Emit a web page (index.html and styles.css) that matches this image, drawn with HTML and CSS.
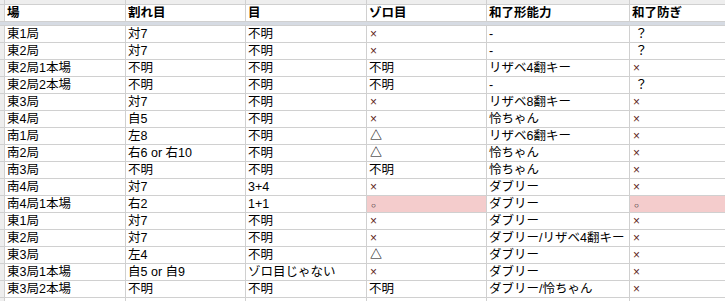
FILE: index.html
```html
<!DOCTYPE html>
<html lang="ja">
<head>
<meta charset="utf-8">
<title>sheet</title>
<link rel="stylesheet" href="styles.css">
</head>
<body>
<div class="sheet">
  <div class="row strip-row">
    <div class="hdr"></div><div class="hdr"></div><div class="hdr"></div><div class="hdr"></div><div class="hdr"></div><div class="hdr"></div><div class="hdr"></div>
  </div>
  <div class="row head">
    <div class="hdr"></div><div>場</div><div>割れ目</div><div>目</div><div>ゾロ目</div><div>和了形能力</div><div>和了防ぎ</div>
  </div>
  <div class="freeze"></div>
  <div class="row"><div class="hdr"></div><div>東1局</div><div>対7</div><div>不明</div><div><span class="x">×</span></div><div>-</div><div><span class="q">？</span></div></div>
  <div class="row"><div class="hdr"></div><div>東2局</div><div>対7</div><div>不明</div><div><span class="x">×</span></div><div>-</div><div><span class="q">？</span></div></div>
  <div class="row"><div class="hdr"></div><div>東2局1本場</div><div>不明</div><div>不明</div><div>不明</div><div>リザベ4翻キー</div><div><span class="x">×</span></div></div>
  <div class="row"><div class="hdr"></div><div>東2局2本場</div><div>不明</div><div>不明</div><div>不明</div><div>-</div><div><span class="q">？</span></div></div>
  <div class="row"><div class="hdr"></div><div>東3局</div><div>対7</div><div>不明</div><div><span class="x">×</span></div><div>リザベ8翻キー</div><div><span class="x">×</span></div></div>
  <div class="row"><div class="hdr"></div><div>東4局</div><div>自5</div><div>不明</div><div><span class="x">×</span></div><div>怜ちゃん</div><div><span class="x">×</span></div></div>
  <div class="row"><div class="hdr"></div><div>南1局</div><div>左8</div><div>不明</div><div><span class="t">△</span></div><div>リザベ6翻キー</div><div><span class="x">×</span></div></div>
  <div class="row"><div class="hdr"></div><div>南2局</div><div>右6 or 右10</div><div>不明</div><div><span class="t">△</span></div><div>怜ちゃん</div><div><span class="x">×</span></div></div>
  <div class="row"><div class="hdr"></div><div>南3局</div><div>不明</div><div>不明</div><div>不明</div><div>怜ちゃん</div><div><span class="x">×</span></div></div>
  <div class="row"><div class="hdr"></div><div>南4局</div><div>対7</div><div>3+4</div><div><span class="x">×</span></div><div>ダブリー</div><div><span class="x">×</span></div></div>
  <div class="row"><div class="hdr"></div><div>南4局1本場</div><div>右2</div><div>1+1</div><div class="pink"><span class="o">○</span></div><div>ダブリー</div><div class="pink"><span class="o">○</span></div></div>
  <div class="row"><div class="hdr"></div><div>東1局</div><div>対7</div><div>不明</div><div><span class="x">×</span></div><div>ダブリー</div><div><span class="x">×</span></div></div>
  <div class="row"><div class="hdr"></div><div>東2局</div><div>対7</div><div>不明</div><div><span class="x">×</span></div><div>ダブリー/リザベ4翻キー</div><div><span class="x">×</span></div></div>
  <div class="row"><div class="hdr"></div><div>東3局</div><div>左4</div><div>不明</div><div><span class="t">△</span></div><div>ダブリー</div><div><span class="x">×</span></div></div>
  <div class="row"><div class="hdr"></div><div>東3局1本場</div><div>自5 or 自9</div><div>ゾロ目じゃない</div><div><span class="x">×</span></div><div>ダブリー</div><div><span class="x">×</span></div></div>
  <div class="row"><div class="hdr"></div><div>東3局2本場</div><div>不明</div><div>不明</div><div>不明</div><div>ダブリー/怜ちゃん</div><div><span class="x">×</span></div></div>
  <div class="row"><div class="hdr"></div><div></div><div></div><div></div><div></div><div></div><div></div></div>
</div>
</body>
</html>
```

FILE: styles.css
```css
html, body {
  margin: 0;
  padding: 0;
  height: 301px;
  overflow: hidden;
  background: #ffffff;
}

.sheet {
  display: flex;
  flex-direction: column;
  gap: 1px;
  background: #d0d0d0;
  font-family: "Liberation Sans", "Noto Sans CJK JP", sans-serif;
  font-size: 12.5px;
  color: #000000;
}

.row {
  display: grid;
  grid-template-columns: 4px 120px 119px 120px 119px 142px 1fr;
  gap: 1px;
  height: 16px;
}

.row > div {
  background: #ffffff;
  padding-left: 2px;
  line-height: 16px;
  white-space: nowrap;
  overflow: hidden;
}

.row > .hdr {
  background: #eeeeee;
  padding: 0;
}

.strip-row {
  height: 4px;
}

.head > div {
  font-weight: bold;
}

.freeze {
  height: 3px;
  background: #d6dbe3;
}

.row > .pink {
  background: #f4cccc;
}

.x {
  color: #5e2420;
  font-size: 12px;
  padding-left: 1px;
}

.t {
  font-size: 12px;
  font-weight: bold;
  padding-left: 1px;
}

.q {
  padding-left: 3px;
}

.o {
  font-size: 8px;
  font-weight: bold;
  padding-left: 2px;
}
```
